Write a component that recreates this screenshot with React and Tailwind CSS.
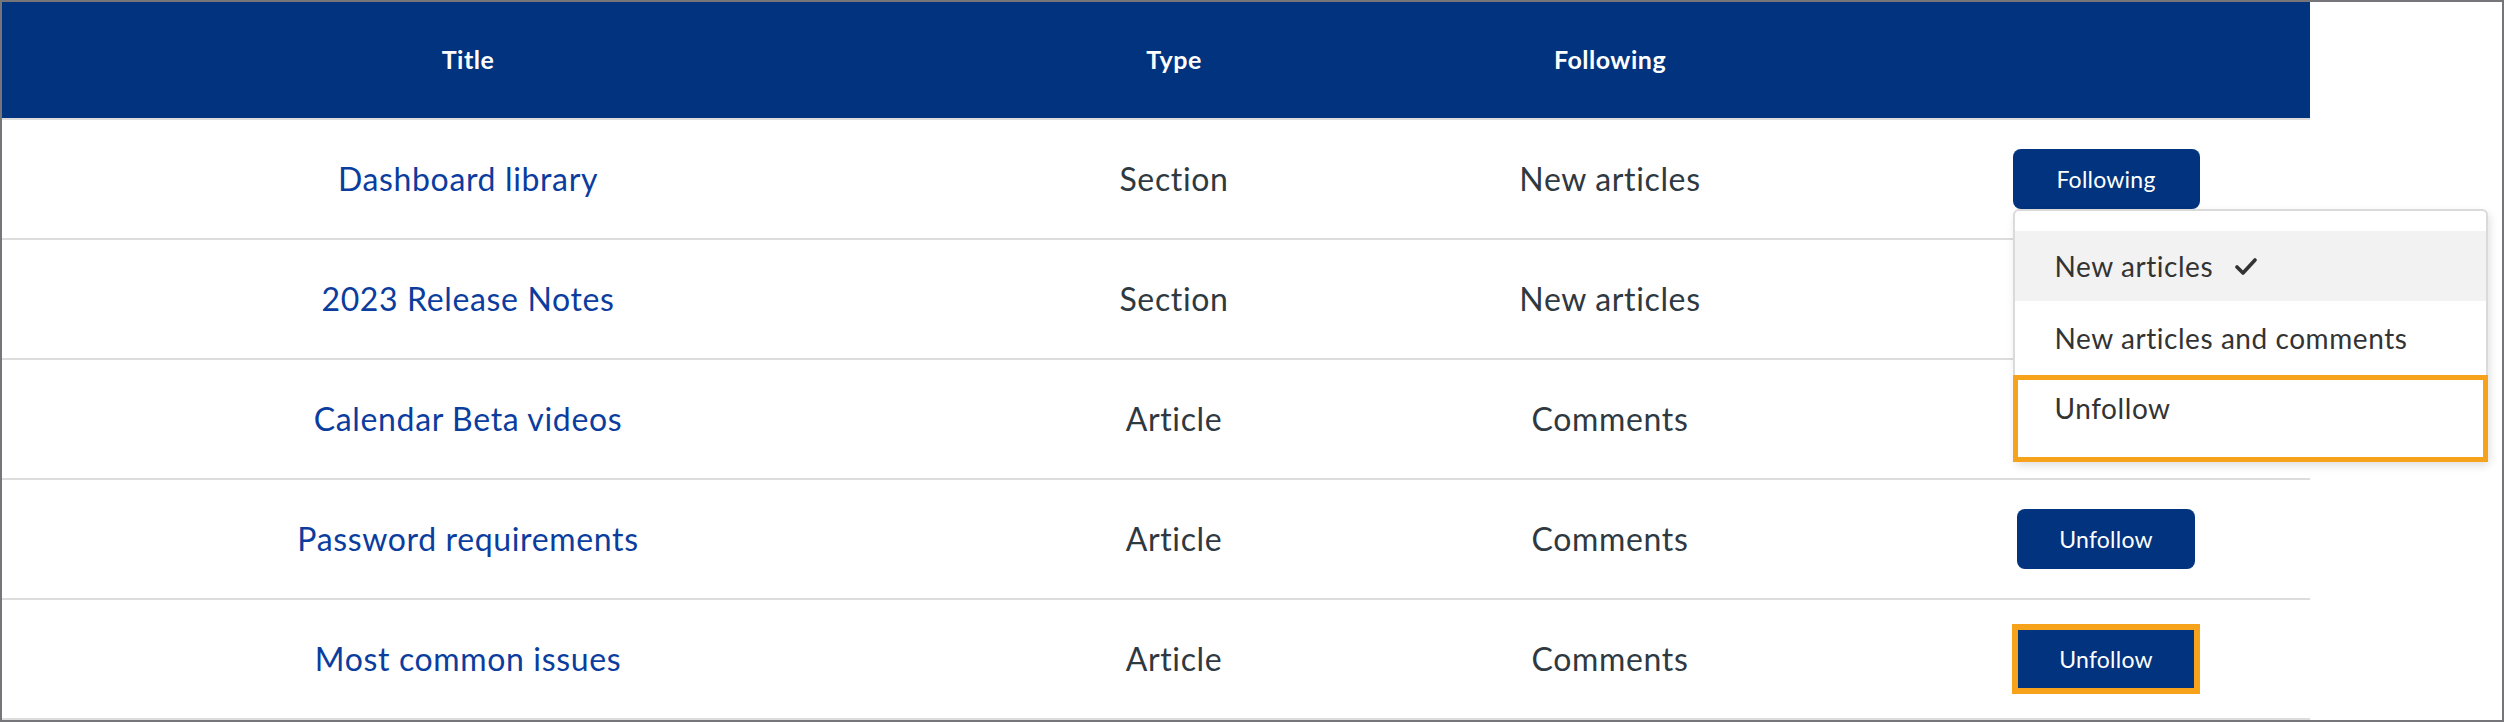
import React from "react";

const rows = [
  { title: "Dashboard library", type: "Section", following: "New articles", button: "Following", menu: true },
  { title: "2023 Release Notes", type: "Section", following: "New articles" },
  { title: "Calendar Beta videos", type: "Article", following: "Comments" },
  { title: "Password requirements", type: "Article", following: "Comments", button: "Unfollow" },
  { title: "Most common issues", type: "Article", following: "Comments", button: "Unfollow", highlight: true },
];

function CheckIcon() {
  return (
    <svg width="22" height="17" viewBox="0 0 22 17" fill="none">
      <path d="M2 9 L8 15 L20 2" stroke="#333333" strokeWidth="3.6" strokeLinecap="round" strokeLinejoin="round" />
    </svg>
  );
}

function FollowMenu() {
  return (
    <div className="absolute left-0 top-full w-[475px] h-[253px] bg-white border-2 border-[#dadada] rounded-[6px] shadow-[2px_4px_8px_rgba(0,0,0,0.12)] pt-[20px] z-10 text-[28px] tracking-[0.02em] text-[#333333]">
      <div className="h-[70px] bg-[#f2f2f2] flex items-center gap-[22px] pl-[40px]">
        <span>New articles</span>
        <CheckIcon />
      </div>
      <div className="h-[74px] flex items-center pl-[40px]">New articles and comments</div>
      {/* highlighted option */}
      <div className="-mx-[2px] h-[87px] border-[5px] border-[#f7a21b] pl-[37px] pt-[9px] leading-[38px]">
        Unfollow
      </div>
    </div>
  );
}

export default function App() {
  return (
    <div
      className="w-[2504px] h-[722px] border-2 border-[#76767a] bg-white overflow-hidden"
      style={{ fontFamily: "Lato, 'Open Sans', sans-serif" }}
    >
      <div className="w-[2308px]">
        <div className="grid grid-cols-[932px_480px_392px_504px] h-[118px] bg-[#01337e] border-b-2 border-[#dcdcdc] text-white font-bold text-[25px] tracking-[0.02em]">
          <div className="flex items-center justify-center">Title</div>
          <div className="flex items-center justify-center">Type</div>
          <div className="flex items-center justify-center">Following</div>
          <div />
        </div>
        {rows.map((r) => (
          <div
            key={r.title}
            className="grid grid-cols-[932px_480px_392px_504px] h-[120px] border-b-2 border-[#dcdcdc] text-[32px] tracking-[0.02em]"
          >
            <div className="flex items-center justify-center text-[#0b3d9e]">{r.title}</div>
            <div className="flex items-center justify-center text-[#2f3941]">{r.type}</div>
            <div className="flex items-center justify-center text-[#2f3941]">{r.following}</div>
            <div className="flex items-center">
              <div className="w-[600px] shrink-0 flex justify-center">
                {r.button && (
                  <div className="relative">
                    <button
                      className={
                        r.highlight
                          ? "h-[60px] w-[178px] bg-[#01337e] text-white text-[23px] tracking-[0.01em] outline-[6px] outline-solid outline-[#f7a21b] -outline-offset-[1px]"
                          : r.button === "Following"
                          ? "h-[60px] w-[187px] bg-[#01337e] text-white text-[23px] tracking-[0.01em] rounded-[8px]"
                          : "h-[60px] w-[178px] bg-[#01337e] text-white text-[23px] tracking-[0.01em] rounded-[8px]"
                      }
                    >
                      {r.button}
                    </button>
                    {r.menu && <FollowMenu />}
                  </div>
                )}
              </div>
            </div>
          </div>
        ))}
      </div>
    </div>
  );
}
